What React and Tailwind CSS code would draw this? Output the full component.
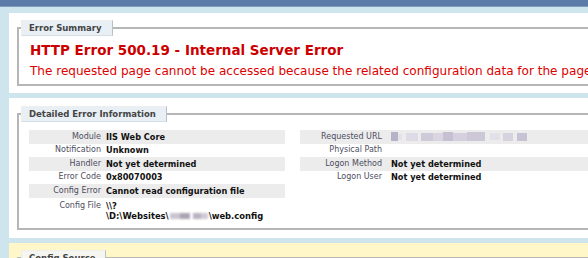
import React from "react";

function Legend({ children, yellow }) {
  return (
    <div
      className={
        "-mt-[9px] ml-[2px] h-[16px] w-fit border border-t-[#eeeeee] border-l-[#eeeeee] border-r-[#b8c0c8] border-b-[#d5dde5] pl-[7px] pr-[10px] text-[8.5px] font-bold leading-[14px] text-[#444444] " +
        (yellow ? "bg-[#f6f6f0]" : "bg-[#e8eff5]")
      }
    >
      {children}
    </div>
  );
}

function Row({ label, value, gray, labelW, gap }) {
  return (
    <div className={"flex h-[13.5px] items-center " + (gray ? "bg-[#ececec]" : "")}>
      <div className={"shrink-0 text-right text-[8px] text-[#4d4d60] " + labelW}>{label}</div>
      <div className={"text-[8.2px] font-bold text-[#111111] " + gap}>{value}</div>
    </div>
  );
}

function UrlBlur() {
  return (
    <div className="flex h-[9px] items-center gap-0 blur-[0.6px]">
      <span className="h-[9px] w-[7px] bg-[#b8b2c8]" />
      <span className="h-[6px] w-[4px] bg-[#e4e2ea]" />
      <span className="ml-[4px] h-[8px] w-[12px] bg-[#dedbe6]" />
      <span className="ml-[3px] h-[8px] w-[12px] bg-[#cfcad9]" />
      <span className="h-[8px] w-[10px] bg-[#d9d6e2]" />
      <span className="h-[9px] w-[10px] bg-[#c6c0d3]" />
      <span className="h-[8px] w-[14px] bg-[#d4d0de]" />
      <span className="h-[9px] w-[18px] bg-[#cdc8d8]" />
      <span className="ml-[5px] h-[7px] w-[10px] bg-[#e2e0e8]" />
      <span className="ml-[3px] h-[8px] w-[10px] bg-[#d6d2df]" />
      <span className="ml-[4px] h-[8px] w-[10px] bg-[#c8c3d4]" />
    </div>
  );
}

export default function App() {
  return (
    <div className="h-[258px] w-[588px] overflow-hidden bg-[#cfe5ee] font-['DejaVu_Sans',sans-serif]">
      <div className="h-[7px] border-b border-[#7f9cc0] bg-[#5b7aa7]" />
      <div className="w-[790px] pl-[9px]">
        {/* Error Summary */}
        <div className="mt-[6px] h-[80px] bg-white pl-[8px] pr-[8px] pt-[14px]">
          <div className="h-[59px] border-2 border-[#b6b6b6]">
            <Legend>Error Summary</Legend>
            <div className="pl-[11px]">
              <div className="mt-[6px] whitespace-nowrap text-[13.5px] font-bold leading-[16px] text-[#cc0000]">
                HTTP Error 500.19 - Internal Server Error
              </div>
              <div className="mt-[6px] whitespace-nowrap text-[12.05px] leading-[14px] text-[#dd0000]">
                The requested page cannot be accessed because the related configuration data for the page is invalid.
              </div>
            </div>
          </div>
        </div>

        {/* Detailed Error Information */}
        <div className="mt-[5px] h-[140px] bg-white pl-[8px] pr-[8px] pt-[15px]">
          <div className="h-[117px] border-2 border-[#b6b6b6]">
            <Legend>Detailed Error Information</Legend>
            <div className="mt-[8px] flex pl-[10px]">
              <div className="w-[256px] shrink-0">
                <Row gray label="Module" value="IIS Web Core" labelW="w-[72px]" gap="pl-[5px]" />
                <Row label="Notification" value="Unknown" labelW="w-[72px]" gap="pl-[5px]" />
                <Row gray label="Handler" value="Not yet determined" labelW="w-[72px]" gap="pl-[5px]" />
                <Row label="Error Code" value="0x80070003" labelW="w-[72px]" gap="pl-[5px]" />
                <Row gray label="Config Error" value="Cannot read configuration file" labelW="w-[72px]" gap="pl-[5px]" />
                <div className="flex pt-[3px]">
                  <div className="w-[72px] shrink-0 text-right text-[8px] leading-[10px] text-[#4d4d60]">Config File</div>
                  <div className="pl-[5px] text-[8.4px] font-bold leading-[10px] text-[#111111]">
                    <div>\\?</div>
                    <div className="flex items-center">
                      <span>\D:\Websites\</span>
                      <span className="mx-[1px] flex h-[6px] w-[38px] blur-[0.8px]">
                        <span className="h-[6px] w-[10px] bg-[#c9c4cf]" />
                        <span className="h-[6px] w-[10px] bg-[#a9a4b2]" />
                        <span className="ml-[3px] h-[6px] w-[8px] bg-[#b7b2c0]" />
                        <span className="h-[6px] w-[7px] bg-[#cfcbd6]" />
                      </span>
                      <span>\web.config</span>
                    </div>
                  </div>
                </div>
              </div>
              <div className="ml-[15px] w-[460px] shrink-0">
                <Row gray label="Requested URL" value={<UrlBlur />} labelW="w-[82px]" gap="pl-[9px]" />
                <Row label="Physical Path" value="" labelW="w-[82px]" gap="pl-[9px]" />
                <Row gray label="Logon Method" value="Not yet determined" labelW="w-[82px]" gap="pl-[9px]" />
                <Row label="Logon User" value="Not yet determined" labelW="w-[82px]" gap="pl-[9px]" />
              </div>
            </div>
          </div>
        </div>

        {/* Config Source */}
        <div className="mt-[5px] h-[60px] bg-[#fff7c7] pl-[8px] pr-[8px] pt-[14px]">
          <div className="h-[40px] border-2 border-[#b6b6b6]">
            <Legend yellow>Config Source</Legend>
          </div>
        </div>
      </div>
    </div>
  );
}
